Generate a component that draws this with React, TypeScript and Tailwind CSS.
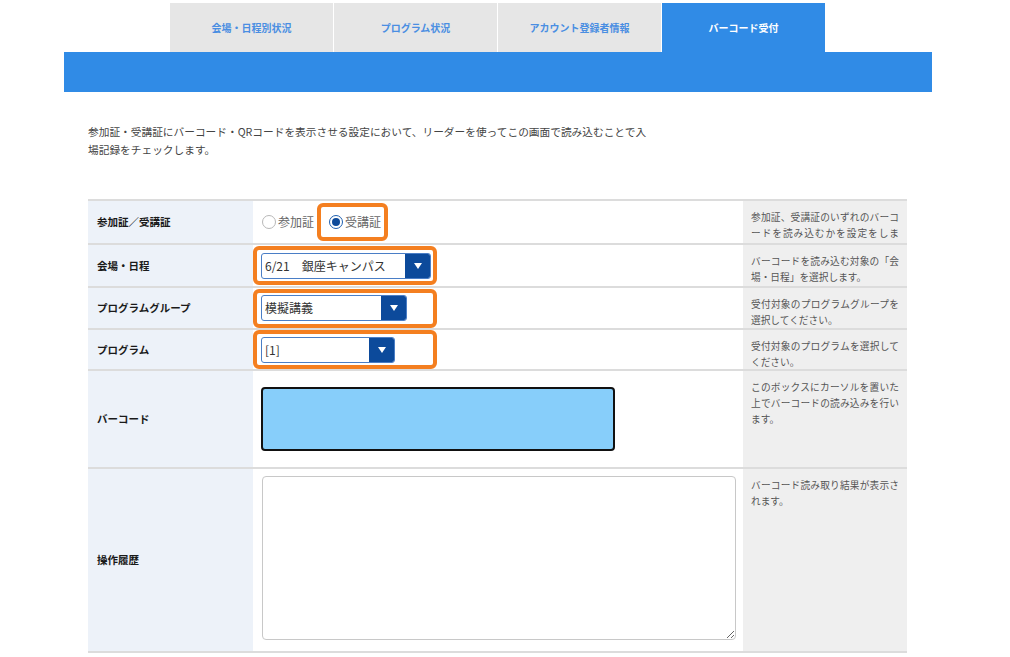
import React from "react";

const FONT = '"Noto Sans CJK JP", "Noto Sans", sans-serif';

function Tab({ label, active }: { label: string; active?: boolean }) {
  return (
    <div
      className={
        "w-[163px] h-[49px] flex items-center justify-center text-[10px] font-bold " +
        (active ? "bg-[#308be6] text-white" : "bg-[#e6e6e6] text-[#4a8ee2]")
      }
    >
      {label}
    </div>
  );
}

function Row({
  label,
  h,
  note,
  children,
}: {
  label: string;
  h: string;
  note?: string;
  children?: React.ReactNode;
}) {
  return (
    <div className={"flex border-b-2 border-[#dcdcdc] " + h}>
      <div className="w-[165px] shrink-0 bg-[#edf2f9] flex items-center pl-[9px] text-[10.5px] font-bold text-[#1a1a1a]">
        {label}
      </div>
      <div className="w-[490px] shrink-0 bg-white flex items-center">{children}</div>
      <div className="w-[164px] shrink-0 bg-[#efefef] px-[8px] pt-[8px] overflow-hidden text-[9.7px] leading-[16px] text-[#555] text-justify">
        {note}
      </div>
    </div>
  );
}

function Select({ text, w }: { text: string; w: string }) {
  return (
    <div className={"flex h-[26px] border border-[#4a7ec6] rounded-[3px] overflow-hidden bg-white " + w}>
      <div className="flex-1 flex items-center pl-[3px] text-[12px] text-[#333] whitespace-pre">{text}</div>
      <div className="w-[25px] bg-[#0c4a9b] flex items-center justify-center">
        <div className="w-0 h-0 border-l-[4px] border-r-[4px] border-t-[6px] border-l-transparent border-r-transparent border-t-white" />
      </div>
    </div>
  );
}

function OrangeSelect({ text, w }: { text: string; w: string }) {
  return (
    <div className="w-[184px] h-[39px] border-[4px] border-[#f47f20] rounded-[6px] flex items-center pl-[4px] relative">
      <Select text={text} w={w} />
    </div>
  );
}

export default function App() {
  return (
    <div className="w-[1010px] h-[657px] bg-white overflow-hidden" style={{ fontFamily: FONT }}>
      <div className="ml-[64px] w-[868px]">
        <div className="flex gap-px pl-[106px] pt-[3px]">
          <Tab label="会場・日程別状況" />
          <Tab label="プログラム状況" />
          <Tab label="アカウント登録者情報" />
          <Tab label="バーコード受付" active />
        </div>
        <div className="h-[40px] bg-[#308be6]" />
        <div className="px-[24px]">
          <p className="mt-[31px] text-[10.7px] leading-[18px] text-[#444]">
            参加証・受講証にバーコード・QRコードを表示させる設定において、リーダーを使ってこの画面で読み込むことで入
            <br />
            場記録をチェックします。
          </p>
          <div className="mt-[40px] border-t-2 border-[#dcdcdc] w-[819px]">
            <Row
              label="参加証／受講証"
              h="h-[44px]"
              note="参加証、受講証のいずれのバーコードを読み込むかを設定をします。"
            >
              <div className="flex items-center pl-[9px] text-[12px] text-[#666]">
                <span className="w-[14px] h-[14px] rounded-full border border-[#b8b8b8] bg-white" />
                <span className="ml-[2px]">参加証</span>
                <div className="ml-[3px] h-[38px] w-[71px] border-[4px] border-[#f47f20] rounded-[6px] flex items-center pl-[8px]">
                  <span className="w-[14px] h-[14px] rounded-full border-[1.5px] border-[#1e5fb0] bg-white flex items-center justify-center">
                    <span className="w-[8px] h-[8px] rounded-full bg-[#0d4a9a]" />
                  </span>
                  <span className="ml-[2px]">受講証</span>
                </div>
              </div>
            </Row>
            <Row
              label="会場・日程"
              h="h-[43px]"
              note="バーコードを読み込む対象の「会場・日程」を選択します。"
            >
              <OrangeSelect text={"6/21　銀座キャンパス"} w="w-[170px]" />
            </Row>
            <Row
              label="プログラムグループ"
              h="h-[42px]"
              note="受付対象のプログラムグループを選択してください。"
            >
              <OrangeSelect text="模擬講義" w="w-[146px]" />
            </Row>
            <Row label="プログラム" h="h-[41px]" note="受付対象のプログラムを選択してください。">
              <OrangeSelect text="[1]" w="w-[134px]" />
            </Row>
            <Row
              label="バーコード"
              h="h-[98px]"
              note="このボックスにカーソルを置いた上でバーコードの読み込みを行います。"
            >
              <div className="ml-[8px] w-[354px] h-[64px] bg-[#87cefa] border-2 border-[#111] rounded-[4px]" />
            </Row>
            <Row
              label="操作履歴"
              h="h-[184px]"
              note="バーコード読み取り結果が表示されます。"
            >
              <textarea className="self-start mt-[7px] ml-[9px] w-[474px] h-[164px] border border-[#c8c8c8] rounded-[4px] bg-white outline-none" />
            </Row>
          </div>
        </div>
      </div>
    </div>
  );
}
